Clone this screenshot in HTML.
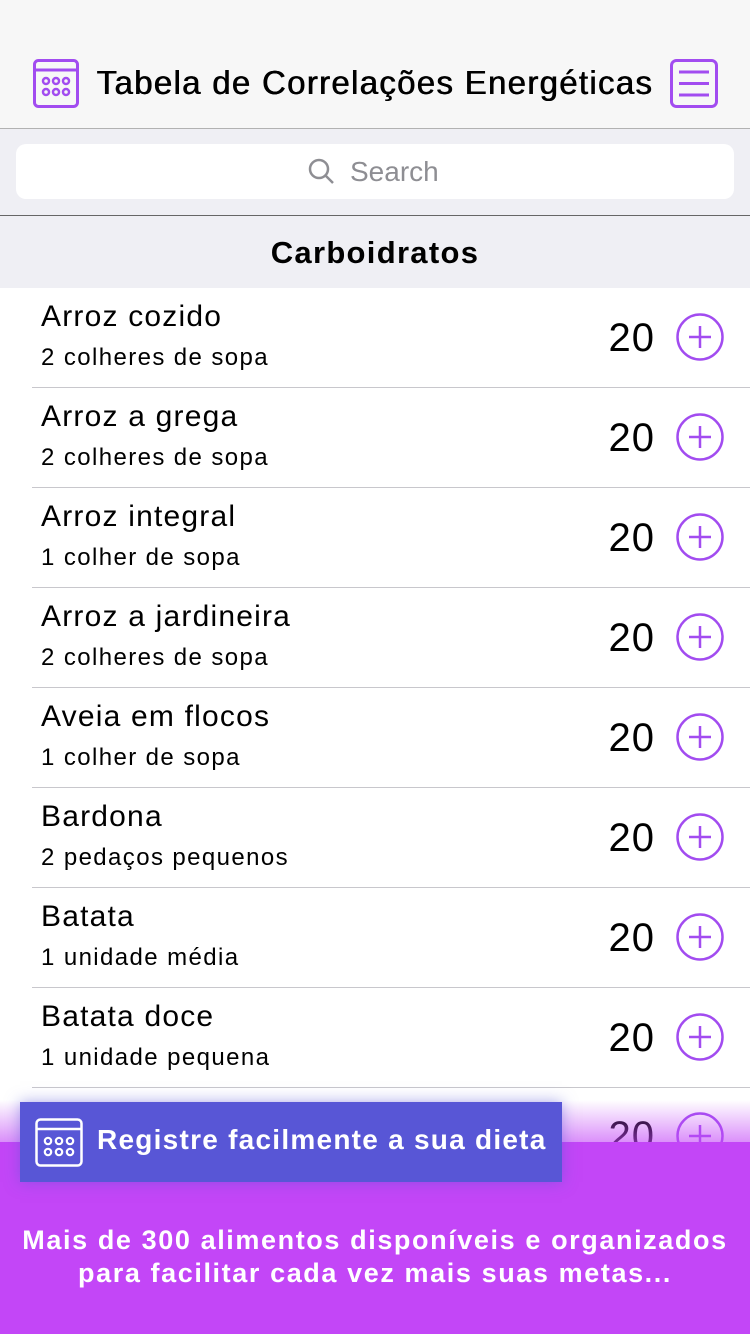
<!DOCTYPE html>
<html><head><meta charset="utf-8"><style>
*{margin:0;padding:0;box-sizing:border-box}
body{width:750px;height:1334px;overflow:hidden;background:#fff;font-family:"Liberation Sans",sans-serif;position:relative}
.nav{position:absolute;top:0;left:0;width:750px;height:129px;background:#f7f7f7;border-bottom:1px solid #b2b2b2}
.title{position:absolute;top:64px;left:0;width:750px;text-align:center;font-size:33px;color:#000;letter-spacing:1.3px;text-shadow:0.4px 0 0 #000,-0.3px 0 0 #000}
.sbar{position:absolute;top:129px;left:0;width:750px;height:87px;background:#efeff4;border-bottom:1px solid #666}
.sfield{position:absolute;left:16px;top:15px;width:718px;height:55px;background:#fff;border-radius:10px}
.sfield span{position:absolute;left:334px;top:12px;font-size:28px;color:#8e8e93}
.hdr{position:absolute;top:216px;left:0;width:750px;height:72px;background:#efeff4;text-align:center;font-size:31px;font-weight:bold;line-height:74px;color:#000;letter-spacing:1.3px}
.row{position:absolute;left:0;width:750px;height:100px}
.row .n{position:absolute;left:41px;top:12px;font-size:30px;color:#000;letter-spacing:1.2px}
.row .s{position:absolute;left:41px;top:56px;font-size:24px;color:#000;letter-spacing:1.4px}
.row .v{position:absolute;right:95px;top:28px;font-size:40px;color:#000;letter-spacing:1px}
.row svg{position:absolute;left:676px;top:25px}
.row .line{position:absolute;left:32px;right:0;bottom:0;height:1px;background:#c8c7cc}
.fade{position:absolute;left:0;top:1100px;width:750px;height:42px;background:linear-gradient(rgba(195,70,247,0),rgba(195,70,247,0.6))}
.bottom{position:absolute;left:0;top:1142px;width:750px;height:192px;background:#c346f7}
.bottom p{position:absolute;top:82px;width:750px;text-align:center;color:#fff;font-weight:bold;font-size:27px;line-height:33px;letter-spacing:1.6px}
.banner{position:absolute;left:20px;top:1102px;width:542px;height:80px;background:#5856d6;box-shadow:0 0 14px rgba(88,86,214,0.5)}
.banner span{position:absolute;left:77px;top:22px;color:#fff;font-weight:bold;font-size:28px;letter-spacing:1.25px;white-space:nowrap}
</style></head><body>
<div class="nav">
<svg style="position:absolute;left:33px;top:59px" width="46" height="49" viewBox="0 0 46 49" fill="none" stroke="#a24cf0" stroke-width="3"><rect x="1.5" y="1.5" width="43" height="46" rx="4"/><line x1="1.5" y1="11" x2="44.5" y2="11"/><g stroke-width="2.5"><circle cx="13" cy="22" r="3"/><circle cx="23" cy="22" r="3"/><circle cx="33" cy="22" r="3"/><circle cx="13" cy="33" r="3"/><circle cx="23" cy="33" r="3"/><circle cx="33" cy="33" r="3"/></g></svg>
<div class="title">Tabela de Correlações Energéticas</div>
<svg style="position:absolute;left:670px;top:59px" width="48" height="49" viewBox="0 0 48 49" fill="none" stroke="#a24cf0" stroke-width="3"><rect x="1.5" y="1.5" width="45" height="46" rx="5"/><line x1="9" y1="13" x2="39" y2="13"/><line x1="9" y1="24.5" x2="39" y2="24.5"/><line x1="9" y1="36" x2="39" y2="36"/></svg>
</div>
<div class="sbar"><div class="sfield">
<svg style="position:absolute;left:292px;top:14px" width="28" height="28" viewBox="0 0 28 28" fill="none" stroke="#8e8e93" stroke-width="2.5"><circle cx="11" cy="11" r="9"/><line x1="17.5" y1="17.5" x2="25" y2="25"/></svg>
<span>Search</span></div></div>
<div class="hdr">Carboidratos</div>

<div class="row" style="top:288px"><div class="n">Arroz cozido</div><div class="s">2 colheres de sopa</div><div class="v">20</div><svg width="48" height="48" viewBox="0 0 48 48" fill="none" stroke="#a24cf0" stroke-width="2.5"><circle cx="24" cy="24" r="22.5"/><line x1="24" y1="13" x2="24" y2="35"/><line x1="13" y1="24" x2="35" y2="24"/></svg><div class="line"></div></div>
<div class="row" style="top:388px"><div class="n">Arroz a grega</div><div class="s">2 colheres de sopa</div><div class="v">20</div><svg width="48" height="48" viewBox="0 0 48 48" fill="none" stroke="#a24cf0" stroke-width="2.5"><circle cx="24" cy="24" r="22.5"/><line x1="24" y1="13" x2="24" y2="35"/><line x1="13" y1="24" x2="35" y2="24"/></svg><div class="line"></div></div>
<div class="row" style="top:488px"><div class="n">Arroz integral</div><div class="s">1 colher de sopa</div><div class="v">20</div><svg width="48" height="48" viewBox="0 0 48 48" fill="none" stroke="#a24cf0" stroke-width="2.5"><circle cx="24" cy="24" r="22.5"/><line x1="24" y1="13" x2="24" y2="35"/><line x1="13" y1="24" x2="35" y2="24"/></svg><div class="line"></div></div>
<div class="row" style="top:588px"><div class="n">Arroz a jardineira</div><div class="s">2 colheres de sopa</div><div class="v">20</div><svg width="48" height="48" viewBox="0 0 48 48" fill="none" stroke="#a24cf0" stroke-width="2.5"><circle cx="24" cy="24" r="22.5"/><line x1="24" y1="13" x2="24" y2="35"/><line x1="13" y1="24" x2="35" y2="24"/></svg><div class="line"></div></div>
<div class="row" style="top:688px"><div class="n">Aveia em flocos</div><div class="s">1 colher de sopa</div><div class="v">20</div><svg width="48" height="48" viewBox="0 0 48 48" fill="none" stroke="#a24cf0" stroke-width="2.5"><circle cx="24" cy="24" r="22.5"/><line x1="24" y1="13" x2="24" y2="35"/><line x1="13" y1="24" x2="35" y2="24"/></svg><div class="line"></div></div>
<div class="row" style="top:788px"><div class="n">Bardona</div><div class="s">2 pedaços pequenos</div><div class="v">20</div><svg width="48" height="48" viewBox="0 0 48 48" fill="none" stroke="#a24cf0" stroke-width="2.5"><circle cx="24" cy="24" r="22.5"/><line x1="24" y1="13" x2="24" y2="35"/><line x1="13" y1="24" x2="35" y2="24"/></svg><div class="line"></div></div>
<div class="row" style="top:888px"><div class="n">Batata</div><div class="s">1 unidade média</div><div class="v">20</div><svg width="48" height="48" viewBox="0 0 48 48" fill="none" stroke="#a24cf0" stroke-width="2.5"><circle cx="24" cy="24" r="22.5"/><line x1="24" y1="13" x2="24" y2="35"/><line x1="13" y1="24" x2="35" y2="24"/></svg><div class="line"></div></div>
<div class="row" style="top:988px"><div class="n">Batata doce</div><div class="s">1 unidade pequena</div><div class="v">20</div><svg width="48" height="48" viewBox="0 0 48 48" fill="none" stroke="#a24cf0" stroke-width="2.5"><circle cx="24" cy="24" r="22.5"/><line x1="24" y1="13" x2="24" y2="35"/><line x1="13" y1="24" x2="35" y2="24"/></svg><div class="line"></div></div>
<div class="row" style="top:1088px"><div class="v" style="top:26px">20</div><svg style="top:24px" width="48" height="48" viewBox="0 0 48 48" fill="none" stroke="#a24cf0" stroke-width="2.5"><circle cx="24" cy="24" r="22.5"/><line x1="24" y1="13" x2="24" y2="35"/><line x1="13" y1="24" x2="35" y2="24"/></svg></div>

<div class="fade"></div>
<div class="bottom"><p>Mais de 300 alimentos disponíveis e organizados<br>para facilitar cada vez mais suas metas...</p></div>
<div class="banner">
<svg style="position:absolute;left:15px;top:16px" width="48" height="49" viewBox="0 0 48 49" fill="none" stroke="#fff" stroke-width="2.5"><rect x="1.5" y="1.5" width="45" height="46" rx="4"/><line x1="1.5" y1="11" x2="46.5" y2="11"/><g stroke-width="2.2"><circle cx="13" cy="23" r="3.2"/><circle cx="24" cy="23" r="3.2"/><circle cx="35" cy="23" r="3.2"/><circle cx="13" cy="34" r="3.2"/><circle cx="24" cy="34" r="3.2"/><circle cx="35" cy="34" r="3.2"/></g></svg>
<span>Registre facilmente a sua dieta</span></div>
</body></html>
